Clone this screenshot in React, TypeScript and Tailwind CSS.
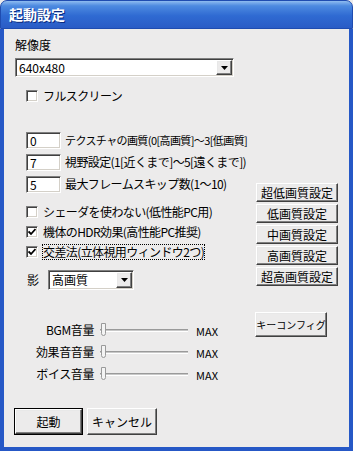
import React from "react";

const font = { fontFamily: '"Noto Sans CJK JP", "Noto Sans", sans-serif' };

const Sunken = "border border-t-[#7f7f7f] border-l-[#7f7f7f] border-b-white border-r-white shadow-[inset_1px_1px_0_#404040,inset_-1px_-1px_0_#d4d0c8]";
const Raised = "border border-t-white border-l-white border-b-[#404040] border-r-[#404040] shadow-[inset_-1px_-1px_0_#808080,inset_1px_1px_0_#e8e8e8] bg-[#ecebeb]";

const Arrow = () => (
  <div className={`w-[16px] h-full flex items-center justify-center ${Raised}`}>
    <svg width="7" height="4" viewBox="0 0 7 4"><path d="M0 0h7L3.5 4z" fill="#000" /></svg>
  </div>
);

const Check = ({ checked, label, focus }: { checked?: boolean; label: string; focus?: boolean }) => (
  <div className="flex items-center h-[20px] pl-[22px]">
    <div className={`w-[12px] h-[12px] shrink-0 bg-white flex items-center justify-center ${Sunken}`}>
      {checked && (
        <svg width="8" height="8" viewBox="0 0 8 8"><path d="M0.5 3.5l2.5 2.5 4.5-5" stroke="#000" strokeWidth="1.8" fill="none" /></svg>
      )}
    </div>
    <span className={`ml-[5px] text-[12px] leading-[14px] tracking-[-0.6px] whitespace-nowrap ${focus ? "outline-1 outline-dotted outline-black" : ""}`}>{label}</span>
  </div>
);

const NumField = ({ v, label, small }: { v: string; label: string; small?: boolean }) => (
  <div className="flex items-center h-[22px] pl-[22px]">
    <div className={`w-[35px] h-[17px] shrink-0 bg-white text-[12px] leading-[15px] pl-[3px] ${Sunken}`}>{v}</div>
    <span className={`ml-[4px] whitespace-nowrap ${small ? "text-[11px] tracking-[-0.6px]" : "text-[12px] tracking-[-0.6px]"}`}>{label}</span>
  </div>
);

const Btn = ({ label, cls, size = "text-[12px]" }: { label: string; cls: string; size?: string }) => (
  <div className={`flex items-center justify-center whitespace-nowrap ${size} ${Raised} ${cls}`}>{label}</div>
);

const Slider = ({ label }: { label: string }) => (
  <div className="flex items-center h-[22px]">
    <span className="w-[96px] text-right text-[12px] tracking-[-0.4px] pr-[6px] whitespace-nowrap">{label}</span>
    <div className="relative w-[88px] h-[14px] flex items-center">
      <div className="w-full h-[3px] border-t border-t-[#9a9a9a] border-b border-b-white bg-[#c8c8c8]" />
      <div className="absolute left-[1px] top-0 w-[5px] h-[13px] bg-[#f4f4f4] border border-[#9a9a9a] rounded-b-[3px]" />
    </div>
    <span className="ml-[8px] text-[11px] mt-[3px]">MAX</span>
  </div>
);

export default function App() {
  return (
    <div className="w-[353px] h-[451px] flex flex-col bg-[#ecebeb] text-black" style={font}>
      <div className="h-[29px] shrink-0 rounded-t-[7px] bg-[linear-gradient(to_bottom,#8fbcf0_0%,#4d8ae0_18%,#2f6ad2_55%,#2a5cc6_100%)] flex items-center pl-[8px] border border-[#1f4cb0]">
        <span className="text-white font-bold text-[14px] [text-shadow:1px_1px_0_#0a2a80]">起動設定</span>
      </div>
      <div className="flex-1 flex flex-col border-x-[4px] border-b-[4px] border-[#2658c6] bg-[#ecebeb]">
        <div className="pl-[11px] pt-[9px] text-[12px] leading-[14px]">解像度</div>
        <div className={`ml-[11px] mt-[6px] w-[219px] h-[19px] bg-white flex items-stretch p-[1px] ${Sunken}`}>
          <span className="flex-1 text-[12px] leading-[15px] pl-[2px]">640x480</span>
          <Arrow />
        </div>
        <div className="mt-[9px]">
          <Check label="フルスクリーン" />
        </div>
        <div className="flex mt-[23px]">
          <div className="flex flex-col w-[250px]">
            <NumField small v="0" label="テクスチャの画質(0[高画質]～3[低画質]" />
            <NumField v="7" label="視野設定(1[近くまで]～5[遠くまで])" />
            <NumField v="5" label="最大フレームスキップ数(1～10)" />
            <div className="mt-[7px]">
              <Check label="シェーダを使わない(低性能PC用)" />
              <Check checked label="機体のHDR効果(高性能PC推奨)" />
              <Check checked focus label="交差法(立体視用ウィンドウ2つ)" />
            </div>
            <div className="flex items-center mt-[8px] pl-[23px] h-[20px]">
              <span className="text-[12px] w-[21px]">影</span>
              <div className={`w-[86px] h-[20px] bg-white flex items-stretch p-[1px] ${Sunken}`}>
                <span className="flex-1 text-[12px] leading-[16px] pl-[2px]">高画質</span>
                <Arrow />
              </div>
            </div>
          </div>
          <div className="flex flex-col gap-[2px] mt-[54px] ml-[2px]">
            <Btn label="超低画質設定" cls="w-[82px] h-[19px]" />
            <Btn label="低画質設定" cls="w-[82px] h-[19px]" />
            <Btn label="中画質設定" cls="w-[82px] h-[19px]" />
            <Btn label="高画質設定" cls="w-[82px] h-[19px]" />
            <Btn label="超高画質設定" cls="w-[82px] h-[19px]" />
          </div>
        </div>
        <div className="flex mt-[29px]">
          <div className="flex flex-col w-[251px]">
            <Slider label="BGM音量" />
            <Slider label="効果音音量" />
            <Slider label="ボイス音量" />
          </div>
          <Btn label="キーコンフィグ" size="text-[10px]" cls="w-[72px] h-[25px] mt-[-7px]" />
        </div>
        <div className="flex gap-[4px] pl-[10px] mt-[23px]">
          <div className="w-[69px] h-[27px] border border-black">
            <Btn label="起動" cls="w-full h-full" />
          </div>
          <Btn label="キャンセル" cls="w-[70px] h-[27px]" />
        </div>
      </div>
    </div>
  );
}
